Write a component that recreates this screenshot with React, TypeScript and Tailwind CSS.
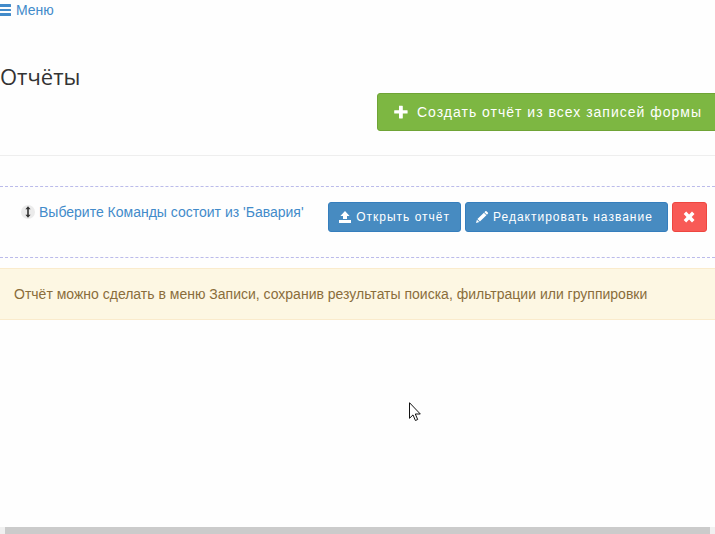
import React from 'react';

const BarsIcon = () => (
  <svg className="h-3 w-3 shrink-0" viewBox="0 0 12 12" fill="currentColor" aria-hidden="true">
    <rect x="-1" y="0" width="12" height="3" rx="0.5" />
    <rect x="-1" y="5" width="12" height="2" rx="0.5" />
    <rect x="-1" y="9" width="12" height="3" rx="0.5" />
  </svg>
);

const PlusIcon = () => (
  <svg className="h-3.5 w-[15px] shrink-0" viewBox="0 0 15 14" fill="currentColor" aria-hidden="true">
    <path d="M5 .8h3.400a.4.4 0 0 1 .4.4v4h4.400a.4.4 0 0 1 .4.4v2.600a.4.4 0 0 1-.4.4H8.800v4.400a.4.4 0 0 1-.4.4H5.400a.4.4 0 0 1-.4-.4V8.600H.6a.4.4 0 0 1-.4-.4V5.600a.4.4 0 0 1 .4-.4H5z" />
  </svg>
);

const OpenIcon = () => (
  <svg className="h-3 w-[13px] shrink-0" viewBox="0 0 13 12" fill="currentColor" aria-hidden="true">
    <path d="M6 0l4.600 5H8v3H4V5H1.400zM0 9h12v3H0z" />
  </svg>
);

const PencilIcon = () => (
  <svg className="h-3 w-[13px] shrink-0" viewBox="0 0 13 12" fill="currentColor" aria-hidden="true">
    <path d="M9.300.3a.8.8 0 0 1 1.200 0l1.300 1.300a.8.8 0 0 1 0 1.200l-.9.9-2.500-2.500zM7.900 1.700l2.500 2.500-6.500 6.400-2.500-2.500zM.9 8.800l2.400 2.300L0 12z" />
  </svg>
);

const RemoveIcon = () => (
  <svg className="h-3 w-[13px] shrink-0" viewBox="0 0 13 12" fill="currentColor" aria-hidden="true">
    <path d="M3.200.6L6.100 3.400 9 .6l2.500 2.500L8.700 6l2.800 2.900L9 11.400 6.100 8.600l-2.900 2.800L.7 8.900 3.500 6 .7 3.100z" />
  </svg>
);

const SortHandle = () => (
  <svg className="h-3.5 w-3.5 shrink-0" viewBox="0 0 14 14" aria-hidden="true">
    <circle cx="7" cy="7" r="7" fill="#ebebeb" />
    <path d="M7 1.300l2.600 3H7.800v5.400h1.800L7 12.700l-2.600-3h1.800V4.300H4.400z" fill="#333" />
  </svg>
);

const Cursor = () => (
  <svg className="pointer-events-none absolute left-[409px] top-[402px] h-5 w-3" viewBox="0 0 12 20" aria-hidden="true">
    <path d="M.5.7v15.600l3.500-3.400 2.400 5.600 2.300-1-2.400-5.500h5z" fill="#fff" stroke="#111" strokeWidth="1" />
  </svg>
);

const reports = [{ id: 1, title: "Выберите Команды состоит из 'Бавария'" }];

const smallButton = 'flex h-[30px] items-center gap-1 rounded-[3px] border px-2.5 text-xs tracking-[1px] text-white';

const App = () => {
  return (
    <div className="relative flex min-h-screen flex-col overflow-hidden bg-[#fefefe] font-['Liberation_Sans',Arial,sans-serif] text-sm text-[#333]">
      <nav>
        <a href="#menu" className="flex h-5 w-fit items-center gap-1 text-[#428bca]">
          <BarsIcon />
          Меню
        </a>
      </nav>

      <header className="border-b border-[#eee] pt-10 pb-6">
        <h1 className="h-8 font-['Open_Sans',sans-serif] text-[22px] leading-8">Отчёты</h1>
        <div className="-mr-2 flex justify-end">
          <button className="mt-px flex h-[38px] min-w-[346px] shrink-0 items-center gap-2 rounded-[3px] border border-[#6fa436] bg-[#7db742] px-4 text-sm tracking-[1px] text-white">
            <PlusIcon />
            Создать отчёт из всех записей формы
          </button>
        </div>
      </header>

      <main className="pt-[30px]">
        <ul>
          {reports.map((report) => (
            <li key={report.id} className="flex items-start justify-between border-y border-dashed border-[#bbbbea] pt-[15px] pr-2 pb-[25px] pl-[21px]">
              <a href="#report" className="flex h-5 items-center gap-1 text-[#428bca]">
                <SortHandle />
                {report.title}
              </a>
              <div className="flex gap-1">
                <button className={`${smallButton} border-[#357ebd] bg-[#478bc1]`}>
                  <OpenIcon />
                  Открыть отчёт
                </button>
                <button className={`${smallButton} min-w-[203px] border-[#357ebd] bg-[#478bc1]`}>
                  <PencilIcon />
                  Редактировать название
                </button>
                <button aria-label="Удалить" className={`${smallButton} border-[#ee4640] bg-[#f85a56]`}>
                  <RemoveIcon />
                </button>
              </div>
            </li>
          ))}
        </ul>

        <p className="mt-2.5 border-y border-[#faebcc] bg-[#fdf7e3] px-3.5 py-[15px] leading-5 text-[#8a6d3b]">
          Отчёт можно сделать в меню Записи, сохранив результаты поиска, фильтрации или группировки
        </p>
      </main>

      <div className="mt-auto h-[7px] bg-[#f0f0f0] px-[5px]">
        <div className="h-full bg-[#cbcbcb]" />
      </div>

      <Cursor />
    </div>
  );
};

export default App;
